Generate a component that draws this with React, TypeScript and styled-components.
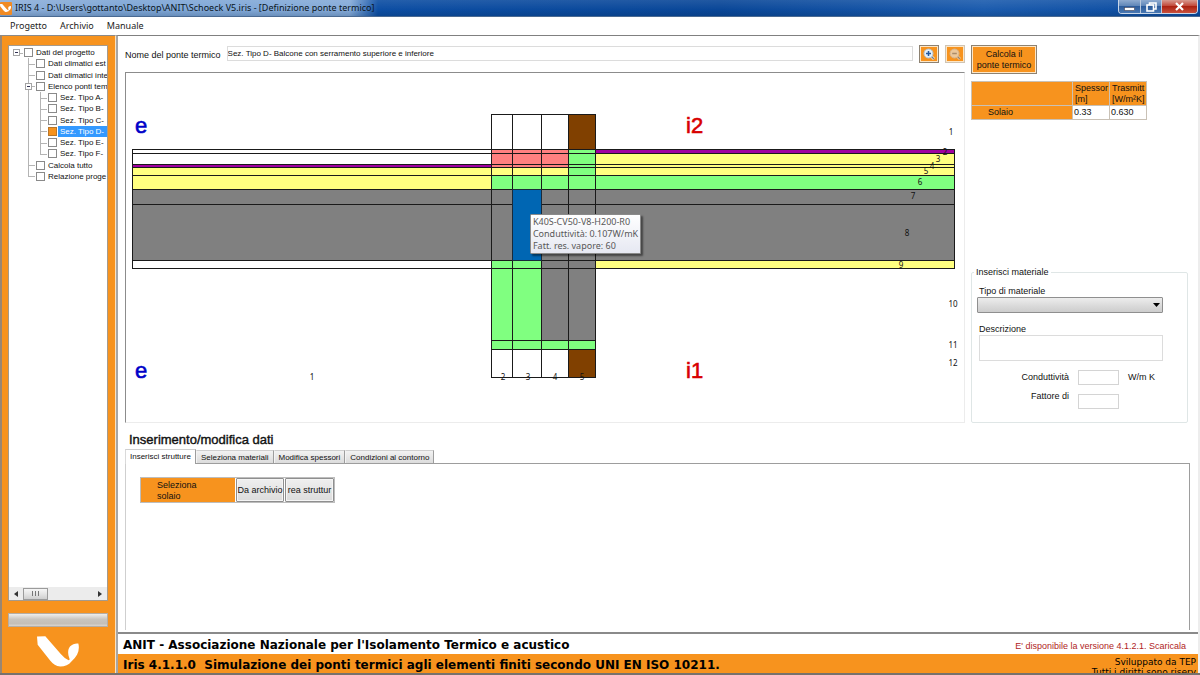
import React, { useState } from "react";
import styled, { createGlobalStyle, css } from "styled-components";

const ORANGE = "#f7931e";
const sans = `"Liberation Sans", Arial, sans-serif`;
const segoe = `"Noto Sans", "Open Sans", sans-serif`;
const verdana = `"DejaVu Sans", Verdana, sans-serif`;

const GlobalStyle = createGlobalStyle`
  *, *::before, *::after { box-sizing: border-box; }
  body { margin: 0; background: #fff; color: #111; font: 9px/11px ${sans}; }
  button, input, select, textarea { font: inherit; color: inherit; margin: 0; padding: 0; border-radius: 0; }
  svg { display: block; }
`;

const Window = styled.div`
  display: flex;
  flex-direction: column;
  min-height: 100vh;
  border-bottom: 2px solid #77716c;
`;

const TitleBar = styled.header`
  display: flex;
  align-items: center;
  gap: 3px;
  height: 17px;
  background: linear-gradient(#ffffff18, #ffffff00 60%, #00204030),
    linear-gradient(90deg, #8fb0da 0, #7ea6d6 120px, #85abd9 350px, #0d4ea3 378px, #0a4798 60%, #1c5cae 82%, #0a4a9e 100%);
  border-bottom: 1px solid #4a6a92;
`;

const Title = styled.h1`
  flex: 1;
  margin: 0;
  font: 9px/16px ${segoe};
  color: #0a1420;
  white-space: nowrap;
`;

const WindowButtons = styled.div`
  display: flex;
  align-self: flex-start;
  margin-right: 2px;
  border: 1px solid #c8d6e8;
  border-top: 0;
  border-radius: 0 0 4px 4px;
  overflow: hidden;
`;

const WindowButton = styled.button<{ $close?: boolean }>`
  display: grid;
  place-items: center;
  width: ${(p) => (p.$close ? 36 : 21)}px;
  height: 13px;
  border: 0;
  border-left: 1px solid #b9c9de;
  background: ${(p) =>
    p.$close
      ? "linear-gradient(#d79a90, #c2493a 45%, #ab2212 50%, #c9503c)"
      : "linear-gradient(#8fabd0, #5f86b8 45%, #2c5c9c 50%, #4a78b2)"};
  &:first-child { border-left: 0; }
`;

const MenuBar = styled.nav`
  display: flex;
  align-items: center;
  gap: 13px;
  height: 18px;
  padding-left: 10px;
  background: #fff;
`;

const MenuItem = styled.button`
  border: 0;
  background: none;
  font: 9px/18px ${segoe};
  color: #222;
`;

const Body = styled.div`
  flex: 1;
  display: grid;
  grid-template-columns: 116px minmax(0, 1fr);
`;

const Sidebar = styled.aside`
  display: flex;
  flex-direction: column;
  padding: 9px 7px 6px 6px;
  background: ${ORANGE};
  border-top: 1px solid #8a8a8a;
  border-left: 2px solid #9a8672;
  border-right: 1px solid #fbe3c2;
`;

const TreeBox = styled.div`
  flex: 1;
  display: flex;
  flex-direction: column;
  justify-content: space-between;
  min-width: 0;
  overflow: hidden;
  background: #fff;
  border: 1px solid #a59a8c;
`;

const Tree = styled.ul`
  display: grid;
  grid-template-rows: repeat(12, 1fr);
  height: 135px;
  margin: 1px 0 0;
  padding: 0 0 0 1px;
  list-style: none;
  font-size: 8px;
`;

const TreeRow = styled.li`
  display: flex;
  align-items: stretch;
  white-space: nowrap;
`;

type GuideKind = "none" | "line" | "tee" | "end" | "open";

const Guide = styled.span<{ $kind: GuideKind }>`
  flex: none;
  position: relative;
  width: 12px;
  ${(p) =>
    (p.$kind === "line" || p.$kind === "tee" || p.$kind === "end") &&
    css`
      &::before {
        content: "";
        position: absolute;
        left: 6px;
        top: 0;
        height: ${p.$kind === "end" ? "50%" : "100%"};
        border-left: 1px solid #b4b4b4;
      }
    `}
  ${(p) =>
    (p.$kind === "tee" || p.$kind === "end" || p.$kind === "open") &&
    css`
      &::after {
        content: "";
        position: absolute;
        left: 6px;
        top: 50%;
        width: 7px;
        border-top: 1px solid #b4b4b4;
      }
    `}
`;

const Expander = styled.button`
  position: absolute;
  z-index: 1;
  left: 3px;
  top: 2px;
  display: grid;
  place-items: center;
  width: 7px;
  height: 7px;
  border: 1px solid #a4a4a4;
  background: #fff;
  &::before { content: ""; width: 3px; height: 1px; background: #335; }
`;

const TreeLabel = styled.label<{ $selected: boolean }>`
  flex: 1;
  display: flex;
  align-items: center;
  padding-left: 2px;
  span {
    flex: 1;
    padding-left: 2px;
    margin-left: 1px;
    line-height: 11px;
    ${(p) => p.$selected && "background: #3399ff; color: #fff;"}
  }
`;

const Tick = styled.input`
  appearance: none;
  flex: none;
  width: 9px;
  height: 9px;
  border: 1px solid #8a8a8a;
  background: #fff;
  &:checked { background: ${ORANGE}; border-color: #b9762a; }
`;

const ScrollBar = styled.div`
  display: flex;
  align-items: center;
  justify-content: space-between;
  height: 13px;
  padding: 0 5px;
  background: #ececec;
`;

const Thumb = styled.div`
  display: flex;
  align-items: center;
  justify-content: center;
  gap: 2px;
  width: 25px;
  height: 12px;
  margin: 0 auto 0 5px;
  border: 1px solid #9b9b9b;
  background: linear-gradient(#f6f6f6, #e4e4e4 50%, #cfcfcf);
  i { width: 1px; height: 5px; background: #777; }
`;

const Progress = styled.div`
  height: 14px;
  margin: 12px 0 9px;
  border: 1px solid #b5ada4;
  background: linear-gradient(#efeeec, #c9c5be 45%, #c4bfb8 80%, #d8d5d0);
`;

const LogoSlot = styled.div`
  display: flex;
  justify-content: center;
`;

const Main = styled.main`
  display: flex;
  flex-direction: column;
  min-width: 0;
  border-top: 1px solid #808080;
  border-left: 2px solid #a6a6a6;
  border-right: 2px solid #ededed;
`;

const Upper = styled.section`
  display: grid;
  grid-template-columns: minmax(0, 1fr) 217px;
  gap: 6px;
  padding: 9px 10px 0 7px;
`;

const Column = styled.div`
  display: flex;
  flex-direction: column;
  min-width: 0;
`;

const NameRow = styled.div`
  display: flex;
  align-items: flex-start;
  gap: 6px;
  height: 27px;
  label { line-height: 20px; white-space: nowrap; }
`;

const NameInput = styled.input`
  flex: 1;
  min-width: 0;
  height: 15px;
  margin-top: 1px;
  border: 1px solid #dcdcdc;
  font-size: 8px;
`;

const ZoomButton = styled.button`
  display: grid;
  place-items: center;
  width: 20px;
  height: 18px;
  border: 1px solid #8d8272;
  background: ${ORANGE};
  box-shadow: inset 0 0 0 1px #fde6c6;
  &:disabled { border-color: #cfc4b4; }
`;

const Canvas = styled.div`
  position: relative;
  border: 1px solid #ececec;
  border-top-color: #8c8c8c;
  border-left-color: #8c8c8c;
  svg { width: 100%; height: auto; }
`;

const Tooltip = styled.div`
  position: absolute;
  left: 48.2%;
  top: 40.4%;
  padding: 1px 2px;
  border: 1px solid #8a8a8a;
  border-radius: 1px;
  background: linear-gradient(#fff, #e6e8f2);
  box-shadow: 2px 2px 2px #0007;
  color: #585858;
  font: 9px/12px ${segoe};
  white-space: nowrap;
  p { margin: 0; }
`;

const CalcButton = styled.button`
  align-self: flex-start;
  width: 66px;
  height: 29px;
  margin-bottom: 7px;
  border: 1px solid #8d8272;
  box-shadow: inset 0 0 0 1px #fde6c6;
  background: ${ORANGE};
`;

const Data = styled.table`
  align-self: flex-start;
  table-layout: fixed;
  width: 175px;
  border-collapse: collapse;
  td, th {
    height: 14px;
    padding: 0 1px;
    border: 1px solid #c9c1b6;
    overflow: hidden;
    font-weight: 400;
    text-align: left;
    white-space: nowrap;
  }
  th { background: ${ORANGE}; }
  thead th { height: 24px; padding: 0 0 0 2px; }
  tbody th { padding-left: 16px; }
`;

const Group = styled.fieldset`
  display: flex;
  flex-direction: column;
  min-width: 0;
  height: 156px;
  margin: auto 0 0;
  padding: 7px 24px 0 5px;
  border: 1px solid #dfe6e6;
  border-radius: 2px;
  legend { margin-left: -3px; padding: 0 2px; }
`;

const FieldLabel = styled.label`
  padding-left: 2px;
  line-height: 12px;
`;

const SelectWrap = styled.div`
  position: relative;
  margin-bottom: 10px;
  select {
    appearance: none;
    display: block;
    width: 100%;
    height: 16px;
    border: 1px solid #8f8f8f;
    border-radius: 1px;
    background: linear-gradient(#ededed, #dcdcdc 50%, #cdcdcd);
  }
  svg { position: absolute; right: 3px; top: 6px; pointer-events: none; }
`;

const Description = styled.textarea`
  height: 26px;
  margin: 0 0 4px 2px;
  border: 1px solid #dcdcdc;
  resize: none;
`;

const ValueRow = styled.div<{ $labelTop?: boolean }>`
  display: grid;
  grid-template-columns: 92px 41px auto;
  gap: 9px;
  align-items: center;
  height: 24px;
  line-height: 14px;
  label { text-align: right; align-self: ${(p) => (p.$labelTop ? "start" : "center")}; }
  input { min-width: 0; height: 15px; border: 1px solid #d4d4d4; }
`;

const Lower = styled.section`
  flex: 1;
  display: flex;
  flex-direction: column;
  padding: 7px 8px 2px 7px;
`;

const Heading = styled.h2`
  margin: 0 0 0 4px;
  font: 500 13px/19px ${sans};
  -webkit-text-stroke: 0.4px #111;
  color: #111;
`;

const TabList = styled.div`
  display: flex;
  align-items: flex-end;
`;

const Tab = styled.button<{ $active: boolean }>`
  position: relative;
  height: ${(p) => (p.$active ? 15 : 13)}px;
  margin-bottom: ${(p) => (p.$active ? -1 : 0)}px;
  padding: ${(p) => (p.$active ? "0 4px 2px" : "0 4px")};
  z-index: ${(p) => (p.$active ? 1 : 0)};
  border: 1px solid #9d9d9d;
  border-left-color: ${(p) => (p.$active ? "#dadada" : "#f4f4f4")};
  border-top-color: #cfcfcf;
  border-bottom: 0;
  background: ${(p) => (p.$active ? "#fff" : "linear-gradient(#f2f2f2, #dcdcdc)")};
  font-size: 8px;
  white-space: nowrap;
`;

const Panel = styled.div`
  flex: 1;
  padding: 13px 14px;
  border: 1px solid #9d9d9d;
  border-left-color: #cfcfcf;
  border-bottom: 0;
`;

const StructureRow = styled.div`
  display: grid;
  grid-template-columns: 94px 49px 50px;
  width: max-content;
  height: 26px;
  border: 1px solid #bdbdbd;
`;

const StructureName = styled.div`
  padding: 2px 40px 0 16px;
  background: ${ORANGE};
`;

const StructureButton = styled.button`
  min-width: 0;
  margin-left: 1px;
  overflow: hidden;
  border: 1px solid #8f8f8f;
  border-radius: 1px;
  box-shadow: inset 0 0 0 1px #f5f5f5;
  background: linear-gradient(#efefef, #dcdcdc);
  white-space: nowrap;
`;

const Footer = styled.footer`
  border-top: 2px solid #8a8a8a;
  font: 700 12px/19px ${verdana};
  color: #000;
`;

const FooterRow = styled.div<{ $accent?: boolean }>`
  display: flex;
  justify-content: space-between;
  align-items: center;
  height: ${(p) => (p.$accent ? 19 : 20)}px;
  padding: 3px ${(p) => (p.$accent ? 2 : 12)}px 0 5px;
  background: ${(p) => (p.$accent ? ORANGE : "#fff")};
  white-space: nowrap;
  overflow: hidden;
`;

const UpdateLink = styled.a`
  font: 9px/12px ${sans};
  color: #b01c24;
  text-decoration: none;
`;

const Credits = styled.div`
  align-self: flex-start;
  font: 9px/10px ${verdana};
  text-align: right;
  p { margin: 0; }
`;

type Node = { label: string; guides: GuideKind[]; open?: boolean };

const nodes: Node[] = [
  { label: "Dati del progetto", guides: ["open"] },
  { label: "Dati climatici est", guides: ["none", "tee"] },
  { label: "Dati climatici inte", guides: ["none", "tee"] },
  { label: "Elenco ponti tem", guides: ["none", "tee"], open: true },
  { label: "Sez. Tipo A-", guides: ["none", "line", "tee"] },
  { label: "Sez. Tipo B-", guides: ["none", "line", "tee"] },
  { label: "Sez. Tipo C-", guides: ["none", "line", "tee"] },
  { label: "Sez. Tipo D-", guides: ["none", "line", "tee"] },
  { label: "Sez. Tipo E-", guides: ["none", "line", "tee"] },
  { label: "Sez. Tipo F-", guides: ["none", "line", "end"] },
  { label: "Calcola tutto", guides: ["none", "tee"] },
  { label: "Relazione proge", guides: ["none", "end"] },
];

function ProjectTree() {
  const [selected, setSelected] = useState(7);
  return (
    <Tree>
      {nodes.map((n, i) => (
        <TreeRow key={n.label}>
          {n.guides.map((g, k) => (
            <Guide key={k} $kind={g}>
              {(g === "open" || (n.open && k === n.guides.length - 1)) && (
                <Expander aria-label={`Comprimi ${n.label}`} />
              )}
            </Guide>
          ))}
          <TreeLabel $selected={i === selected}>
            <Tick type="checkbox" checked={i === selected} onChange={() => setSelected(i)} />
            <span>{n.label}</span>
          </TreeLabel>
        </TreeRow>
      ))}
    </Tree>
  );
}

/* Grid lines of the junction, in drawing units */
const X = [6, 365, 386, 415, 442, 469, 828];
const Y = [41, 76, 80, 91, 94, 102, 116, 131, 187, 195, 267, 276, 304];

const W = "#ffffff", R = "#ff8080", G = "#80ff80", L = "#ffff80", P = "#a000a0", K = "#808080", B = "#804000", U = "#0066b3";

/* One row of materials between each pair of Y lines; null is outside the section */
const materials: (string | null)[][] = [
  [null, W, W, W, B, null],
  [W, R, R, R, G, P],
  [W, R, R, R, G, L],
  [P, R, R, R, G, L],
  [L, L, L, L, G, L],
  [L, G, G, G, G, G],
  [K, K, U, K, K, K],
  [K, K, U, K, K, K],
  [W, G, G, K, K, L],
  [null, G, G, K, K, null],
  [null, G, G, G, G, null],
  [null, W, W, W, B, null],
];

const rowLabels: [number, number][] = [
  [825, 59], [819, 79], [812, 86], [806, 93], [800, 98], [794, 109],
  [787, 123], [781, 160], [775, 192], [827, 231], [827, 272], [827, 290],
];
const columnLabels = [186, 377, 402, 429, 456];

const Environment = styled.text`
  font: 22px ${sans};
  stroke: currentColor;
  stroke-width: 0.6px;
  fill: currentColor;
`;

const Index = styled.text`
  font: 8px ${segoe};
  fill: #111;
  text-anchor: middle;
`;

function Section() {
  return (
    <svg viewBox="0 0 838 349" role="img" aria-label="Sezione del ponte termico">
      {materials.map((row, j) =>
        row.map(
          (fill, i) =>
            fill && (
              <rect
                key={`${i}-${j}`}
                x={X[i] + 0.5}
                y={Y[j] + 0.5}
                width={X[i + 1] - X[i]}
                height={Y[j + 1] - Y[j]}
                fill={fill}
                stroke={fill === U ? "none" : "#1a1a1a"}
              />
            )
        )
      )}
      <rect x={X[2] + 0.5} y={Y[6] + 0.5} width={X[3] - X[2]} height={Y[8] - Y[6]} fill={U} stroke="#1a2a3a" />
      {rowLabels.map(([x, y], i) => (
        <Index key={i} x={x} y={y + 3}>{i + 1}</Index>
      ))}
      {columnLabels.map((x, i) => (
        <Index key={x} x={x} y={307}>{i + 1}</Index>
      ))}
      <Environment x="9" y="60" color="#0000c8">e</Environment>
      <Environment x="9" y="305" color="#0000c8">e</Environment>
      <Environment x="560" y="60" color="#d80000">i2</Environment>
      <Environment x="560" y="305" color="#d80000">i1</Environment>
    </svg>
  );
}

const LOGO = "M0 1 L25 0 L72 54 Q84 68 95 72 C98 72 99 70 97 66 C91 52 93 38 99 31 C106 23 116 21 124 22 C129 42 122 60 104 75 C95 86 84 91 70 91 C57 91 48 84 40 74 L2 26 Z";

function Magnifier({ minus }: { minus?: boolean }) {
  return (
    <svg width="12" height="12" viewBox="0 0 12 12" opacity={minus ? 0.7 : 1}>
      <path d="M7.5 7.5 L11 11" stroke="#e6dccb" strokeWidth="3" />
      <path d="M7.5 7.5 L10.8 10.8" stroke="#6d7888" strokeWidth="1.2" />
      <circle cx="5.5" cy="5.5" r="4.5" fill={minus ? "#e6ddd0" : "#e4f0fb"} stroke={minus ? "#c9c2b8" : "#b4c4d4"} />
      <path
        d={minus ? "M3.2 5.5 H7.8" : "M3 5.5 H8 M5.5 3 V8"}
        stroke={minus ? "#8a8a8a" : "#2358a0"}
        strokeWidth="1.5"
      />
    </svg>
  );
}

const tabs = ["Inserisci strutture", "Seleziona materiali", "Modifica spessori", "Condizioni al contorno"];

export default function App() {
  const [tab, setTab] = useState(0);
  return (
    <Window>
      <GlobalStyle />
      <TitleBar>
        <svg width="12" height="13" viewBox="0 0 12 13">
          <rect width="12" height="13" rx="1" fill="#f08a24" />
          <g transform="translate(0 2) scale(0.088)"><path d={LOGO} fill="#fff" /></g>
        </svg>
        <Title>IRIS 4 - D:\Users\gottanto\Desktop\ANIT\Schoeck V5.iris - [Definizione ponte termico]</Title>
        <WindowButtons>
          <WindowButton aria-label="Riduci a icona">
            <svg width="11" height="9"><rect x="0.5" y="5.5" width="10" height="3" fill="#fff" stroke="#445" strokeWidth="0.6" /></svg>
          </WindowButton>
          <WindowButton aria-label="Ripristina">
            <svg width="11" height="10" fill="none" stroke="#fff" strokeWidth="1.6"><path d="M3.5 3 V1 H10 V7 H8" /><rect x="1" y="3" width="6.5" height="6" /></svg>
          </WindowButton>
          <WindowButton $close aria-label="Chiudi">
            <svg width="9" height="9" stroke="#fff" strokeWidth="2.2"><path d="M1 1 L8 8 M8 1 L1 8" /></svg>
          </WindowButton>
        </WindowButtons>
      </TitleBar>
      <MenuBar>
        {["Progetto", "Archivio", "Manuale"].map((m) => <MenuItem key={m}>{m}</MenuItem>)}
      </MenuBar>
      <Body>
        <Sidebar>
          <TreeBox>
            <ProjectTree />
            <ScrollBar>
              <svg width="4" height="6"><path d="M4 0 V6 L0 3 Z" fill="#333" /></svg>
              <Thumb><i /><i /><i /></Thumb>
              <svg width="4" height="6"><path d="M0 0 V6 L4 3 Z" fill="#333" /></svg>
            </ScrollBar>
          </TreeBox>
          <Progress />
          <LogoSlot>
            <svg width="42" height="31" viewBox="0 0 126 92"><path d={LOGO} fill="#fff" /></svg>
          </LogoSlot>
        </Sidebar>
        <Main>
          <Upper>
            <Column>
              <NameRow>
                <label htmlFor="nome">Nome del ponte termico</label>
                <NameInput id="nome" defaultValue="Sez. Tipo D- Balcone con serramento superiore e inferiore" />
                <ZoomButton aria-label="Ingrandisci"><Magnifier /></ZoomButton>
                <ZoomButton aria-label="Riduci" disabled><Magnifier minus /></ZoomButton>
              </NameRow>
              <Canvas>
                <Section />
                <Tooltip role="tooltip">
                  <p>K40S-CV50-V8-H200-R0</p>
                  <p>Conduttività: 0.107W/mK</p>
                  <p>Fatt. res. vapore: 60</p>
                </Tooltip>
              </Canvas>
            </Column>
            <Column>
              <CalcButton>Calcola il<br />ponte termico</CalcButton>
              <Data>
                <colgroup><col width="101" /><col width="37" /><col width="37" /></colgroup>
                <thead>
                  <tr><th /><th scope="col">Spessor<br />[m]</th><th scope="col">Trasmitt<br />[W/m²K]</th></tr>
                </thead>
                <tbody>
                  <tr><th scope="row">Solaio</th><td>0.33</td><td>0.630</td></tr>
                </tbody>
              </Data>
              <Group>
                <legend>Inserisci materiale</legend>
                <FieldLabel htmlFor="tipo">Tipo di materiale</FieldLabel>
                <SelectWrap>
                  <select id="tipo" defaultValue=""><option value="" /></select>
                  <svg width="7" height="4"><path d="M0 0 H7 L3.5 4 Z" fill="#000" /></svg>
                </SelectWrap>
                <FieldLabel htmlFor="descr">Descrizione</FieldLabel>
                <Description id="descr" />
                <ValueRow>
                  <label htmlFor="cond">Conduttività</label><input id="cond" /><span>W/m K</span>
                </ValueRow>
                <ValueRow $labelTop>
                  <label htmlFor="fatt">Fattore di</label><input id="fatt" />
                </ValueRow>
              </Group>
            </Column>
          </Upper>
          <Lower>
            <Heading>Inserimento/modifica dati</Heading>
            <TabList role="tablist">
              {tabs.map((t, i) => (
                <Tab key={t} role="tab" aria-selected={i === tab} $active={i === tab} onClick={() => setTab(i)}>{t}</Tab>
              ))}
            </TabList>
            <Panel role="tabpanel">
              <StructureRow>
                <StructureName>Seleziona solaio</StructureName>
                <StructureButton>Da archivio</StructureButton>
                <StructureButton>rea struttur</StructureButton>
              </StructureRow>
            </Panel>
          </Lower>
          <Footer>
            <FooterRow>
              <span>ANIT - Associazione Nazionale per l'Isolamento Termico e acustico</span>
              <UpdateLink href="#aggiorna">E' disponibile la versione 4.1.2.1. Scaricala</UpdateLink>
            </FooterRow>
            <FooterRow $accent>
              <span>Iris 4.1.1.0&nbsp; Simulazione dei ponti termici agli elementi finiti secondo UNI EN ISO 10211.</span>
              <Credits>
                <p>Sviluppato da TEP</p>
                <p>Tutti i diritti sono riserv</p>
              </Credits>
            </FooterRow>
          </Footer>
        </Main>
      </Body>
    </Window>
  );
}
